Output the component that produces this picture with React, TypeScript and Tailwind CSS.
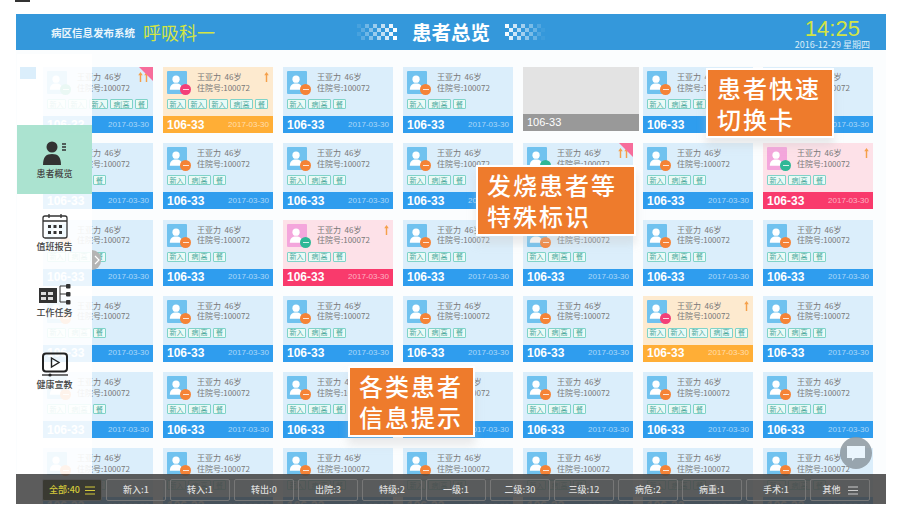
import React from "react";

type Tone = "blue" | "orange" | "pink" | "grey";
type CardSpec = { tone?: Tone; badge?: "orange" | "green" | "pink"; arrows?: 0 | 1 | 2; corner?: boolean; five?: boolean };

const rows: CardSpec[][] = [
  [{ badge: "green", arrows: 2, corner: true, five: true }, { tone: "orange", badge: "pink", arrows: 1, five: true }, {}, {}, { tone: "grey" }, {}, {}],
  [{}, {}, {}, {}, { badge: "green", arrows: 2, corner: true }, {}, { tone: "pink", badge: "green", arrows: 1 }],
  [{}, {}, { tone: "pink", badge: "green", arrows: 1 }, {}, {}, {}, {}],
  [{}, {}, {}, {}, {}, { tone: "orange", badge: "pink", arrows: 1, five: true }, {}],
  [{}, {}, {}, {}, {}, {}, {}],
  [{}, {}, {}, {}, {}, {}, {}],
];

const bodyTone: Record<string, string> = { blue: "bg-[#dbeefb]", orange: "bg-[#fdeacf]", pink: "bg-[#fde1e8]" };
const footTone: Record<string, string> = { blue: "bg-[#2f9dee]", orange: "bg-[#ffae36]", pink: "bg-[#f93a6c]" };
const avatarTone: Record<string, string> = { blue: "bg-[#70c2ef]", orange: "bg-[#70c2ef]", pink: "bg-[#f4a6dc]" };
const badgeTone = { orange: "bg-[#f58337]", green: "bg-[#2fb896]", pink: "bg-[#f33f78]" };

function Person() {
  return (
    <svg viewBox="0 0 21 23" className="h-full w-full">
      <circle cx="9.5" cy="8" r="3.8" fill="#fff" />
      <path d="M3 19c0-4.5 2.5-6.4 6.5-6.4s6.5 1.9 6.5 6.4z" fill="#fff" />
    </svg>
  );
}

function Arrow() {
  return (
    <svg viewBox="0 0 5 11" className="h-[10px] w-[5px]">
      <path d="M2.5 0 5 3.5H3.3V11H1.7V3.5H0z" fill="#f5a04a" />
    </svg>
  );
}

function Tag({ children, width }: { children: React.ReactNode; width: string }) {
  return (
    <span className={`flex h-[10px] items-center justify-center rounded-[1px] border border-[#7fd3c8] bg-[#eafaf6] text-[7px] leading-none text-[#4aa99c] ${width}`}>
      {children}
    </span>
  );
}

function Card({ spec }: { spec: CardSpec }) {
  const tone = spec.tone ?? "blue";
  if (tone === "grey") {
    return (
      <div className="flex h-[64px] w-[116px] flex-col bg-[#e3e3e3]">
        <div className="flex-1" />
        <div className="flex h-[17px] items-center bg-[#999999] px-1 font-['Liberation_Sans',sans-serif] text-[11px] text-white">106-33</div>
      </div>
    );
  }
  return (
    <div className={`relative flex h-[66px] w-[110px] flex-col overflow-hidden ${bodyTone[tone]}`}>
      {spec.corner && <div className="absolute right-0 top-0 h-0 w-0 border-l-[14px] border-t-[14px] border-l-transparent border-t-[#f76d9b]" />}
      <div className="flex flex-1 flex-col px-1 pt-1">
        <div className="flex">
          <div className={`relative h-[23px] w-[20px] shrink-0 rounded-[1px] ${avatarTone[tone]}`}>
            <Person />
            <div className={`absolute -bottom-[1px] -right-[4px] flex h-[11px] w-[11px] items-center justify-center rounded-full ${badgeTone[spec.badge ?? "orange"]}`}>
              <div className="h-[1px] w-[6px] bg-white/80" />
            </div>
          </div>
          <div className="ml-[10px] flex flex-col pt-[1px] text-[8px] leading-[10.5px] text-[#777777]">
            <span>王亚力&nbsp;&nbsp;46岁</span>
            <span>住院号:100072</span>
          </div>
          {spec.arrows ? (
            <div className="ml-auto flex gap-[1px] pt-[1px]">
              {spec.arrows === 2 && <Arrow />}
              <Arrow />
            </div>
          ) : null}
        </div>
        <div className="mt-[5px] flex gap-[2px]">
          <Tag width="w-[19px]">新入</Tag>
          {spec.five && <Tag width="w-[19px]">新入</Tag>}
          {spec.five && <Tag width="w-[19px]">新入</Tag>}
          <Tag width="w-[23px]">病|高</Tag>
          <Tag width="w-[13px]">餐</Tag>
        </div>
      </div>
      <div className={`flex h-[17px] shrink-0 items-center justify-between px-1 ${footTone[tone]}`}>
        <span className="font-['Liberation_Sans',sans-serif] text-[12px] font-bold text-white">106-33</span>
        <span className="font-['Liberation_Sans',sans-serif] text-[8px] text-white/60">2017-03-30</span>
      </div>
    </div>
  );
}

function Checker({ flip }: { flip?: boolean }) {
  const cells: React.ReactNode[] = [];
  for (let c = 0; c < 10; c++) {
    for (let r = 0; r < 4; r++) {
      if ((c + r) % 2 === 0) {
        const t = (c + 1) / 10;
        cells.push(<rect key={`${c}-${r}`} x={c * 4} y={r * 4} width="4" height="4" fill="#fff" opacity={flip ? 1.05 - t : t} />);
      }
    }
  }
  return (
    <svg viewBox="0 0 40 16" className="h-[16px] w-[40px]">
      {cells}
    </svg>
  );
}

function Callout({ className, lines }: { className: string; lines: string[] }) {
  return (
    <div className={`absolute z-20 flex flex-col justify-center gap-[3px] border-2 border-white bg-[#ee7b2c] pl-[9px] text-[24px] font-medium leading-[28px] tracking-[2px] text-white shadow-[0_8px_8px_rgba(200,200,200,0.35)] ${className}`}>
      {lines.map((l) => (
        <span key={l}>{l}</span>
      ))}
    </div>
  );
}

function NavItem({ icon, label, className }: { icon: React.ReactNode; label: string; className: string }) {
  return (
    <div className={`flex flex-col items-center justify-center ${className}`}>
      {icon}
      <span className="text-[9px] font-medium leading-[12px] text-[#444444]">{label}</span>
    </div>
  );
}

const filters = ["新入:1", "转入:1", "转出:0", "出院:3", "特级:2", "一级:1", "二级:30", "三级:12", "病危:2", "病重:1", "手术:1"];

function Lines({ color }: { color: string }) {
  return (
    <svg viewBox="0 0 10 9" className="h-[9px] w-[10px]">
      <path d="M0 1h10M0 4.5h10M0 8h10" stroke={color} strokeWidth="1" />
    </svg>
  );
}

export default function App() {
  return (
    <div className="relative h-[507px] w-[900px] overflow-hidden bg-white font-['Noto_Sans_CJK_SC','Noto_Sans',sans-serif]">
      <div className="h-[14px] pl-[15px]">
        <div className="h-[2px] w-[15px] bg-[#333333]" />
      </div>
      <div className="relative ml-[16px] h-[490px] w-[870px] overflow-hidden bg-[#fbfdfe]">
        <header className="relative flex h-[36px] items-center justify-between bg-[#3498db] pl-[35px] pr-[16px]">
          <div className="flex items-center gap-[8px]">
            <span className="pt-[2px] text-[10.5px] font-bold leading-none text-[#eaf5fb]">病区信息发布系统</span>
            <span className="text-[18px] leading-none text-[#d3e445]">呼吸科一</span>
          </div>
          <div className="absolute left-[341px] top-0 flex h-full items-center gap-[15px]">
            <Checker />
            <span className="text-[19.5px] font-bold leading-none text-white">患者总览</span>
            <Checker flip />
          </div>
          <div className="flex flex-col items-center pt-[3px]">
            <span className="font-['Liberation_Sans',sans-serif] text-[22px] leading-[22px] text-[#d3e445]">14:25</span>
            <span className="text-[9px] leading-[10px] text-[#d8ecf8]">2016-12-29 星期四</span>
          </div>
        </header>

        <main className="grid grid-cols-[repeat(7,110px)] gap-x-[10px] gap-y-[10.25px] pl-[27px] pt-[17px]">
          {rows.flat().map((spec, i) => (
            <Card key={i} spec={spec} />
          ))}
        </main>

        <aside className="absolute left-[1px] top-[40px] z-10 flex h-[420px] w-[75px] flex-col bg-white/90">
          <div className="ml-[3px] mt-[13px] h-[12px] w-[16px] bg-[#dbeefb]" />
          <NavItem
            className="mt-[46px] h-[69px] bg-[#a6e1ce]/95"
            label="患者概览"
            icon={
              <svg viewBox="0 0 26 26" className="mb-[2px] h-[26px] w-[26px]">
                <circle cx="10" cy="7" r="5.5" fill="#333" />
                <path d="M1 25c0-8 3-11 9-11s9 3 9 11z" fill="#333" />
                <path d="M20 4h4M20 7h4M20 10h4" stroke="#333" strokeWidth="1.4" />
              </svg>
            }
          />
          <NavItem
            className="mt-[17px] h-[44px]"
            label="值班报告"
            icon={
              <svg viewBox="0 0 26 26" className="mb-[2px] h-[26px] w-[26px]">
                <rect x="1" y="3" width="24" height="22" rx="2" fill="none" stroke="#333" strokeWidth="1.3" />
                <path d="M1 8h24M7 1v4M19 1v4" stroke="#333" strokeWidth="1.3" />
                <path d="M6 12h3v3H6zM11.5 12h3v3h-3zM17 12h3v3h-3zM6 18h3v3H6zM11.5 18h3v3h-3zM17 18h3v3h-3z" fill="#333" />
              </svg>
            }
          />
          <NavItem
            className="mt-[28px] h-[36px]"
            label="工作任务"
            icon={
              <svg viewBox="0 0 34 22" className="mb-[2px] h-[22px] w-[34px]">
                <path d="M1 5h18v15H1z" fill="#333" />
                <path d="M3 9h5v3H3zM10 9h5v3h-5zM3 14h5v3H3zM10 14h5v3h-5z" fill="#ddd" />
                <path d="M22 3v16M22 3h6M22 11h6M22 19h6" stroke="#333" strokeWidth="1" fill="none" />
                <rect x="28" y="1" width="4.5" height="4.5" rx="1" fill="#333" />
                <rect x="28" y="9" width="4.5" height="4.5" rx="1" fill="#333" />
                <rect x="28" y="17" width="4.5" height="4.5" rx="1" fill="#333" />
              </svg>
            }
          />
          <NavItem
            className="mt-[32px] h-[40px]"
            label="健康宣教"
            icon={
              <svg viewBox="0 0 28 26" className="mb-[1px] h-[26px] w-[28px]">
                <rect x="2" y="1.5" width="24" height="18" rx="3" fill="none" stroke="#222" strokeWidth="2" />
                <path d="M10.5 6 18 10.5 10.5 15z" fill="none" stroke="#222" strokeWidth="1.4" />
                <path d="M1 23h26" stroke="#222" strokeWidth="1.3" />
                <circle cx="9" cy="23" r="1.6" fill="#222" />
              </svg>
            }
          />
          <div className="absolute left-[75px] top-[196px] flex h-[20px] w-[9px] items-center justify-center rounded-r-full bg-[#b4b4b4]">
            <svg viewBox="0 0 6 10" className="h-[10px] w-[6px]">
              <path d="M1 1l4 4-4 4" fill="none" stroke="#fff" strokeWidth="1.2" />
            </svg>
          </div>
        </aside>

        <Callout className="left-[690px] top-[54px] h-[70px] w-[128px]" lines={["患者快速", "切换卡"]} />
        <Callout className="left-[460px] top-[151px] h-[71px] w-[160px]" lines={["发烧患者等", "特殊标识"]} />
        <Callout className="left-[332px] top-[352px] h-[71px] w-[127px]" lines={["各类患者", "信息提示"]} />

        <div className="absolute left-[824px] top-[423px] z-20 flex h-[32px] w-[32px] items-center justify-center rounded-full bg-[#8c98a0]/85">
          <svg viewBox="0 0 18 15" className="h-[15px] w-[18px]">
            <path d="M0 0h18v12H8l-3 3v-3H0z" fill="#eaf5fd" />
          </svg>
        </div>

        <footer className="absolute bottom-0 left-0 z-20 flex h-[30px] w-[870px] items-center gap-[4px] bg-[#4a4a4a]/90 pl-[26px] pt-[2px]">
          <div className="flex h-[22px] w-[60px] items-center justify-center gap-[5px] rounded-[2px] border border-[#555555] bg-[#3a3a32] text-[9px] font-medium text-[#d3c93a]">
            全部:40
            <Lines color="#d3c93a" />
          </div>
          {filters.map((f) => (
            <div key={f} className="flex h-[22px] w-[60px] items-center justify-center rounded-[2px] border border-[#777777] text-[9px] font-medium text-[#dddddd]">
              {f}
            </div>
          ))}
          <div className="flex h-[22px] w-[60px] items-center justify-center gap-[7px] rounded-[2px] border border-[#777777] text-[9px] font-medium text-[#dddddd]">
            其他
            <Lines color="#cccccc" />
          </div>
        </footer>
      </div>
    </div>
  );
}
